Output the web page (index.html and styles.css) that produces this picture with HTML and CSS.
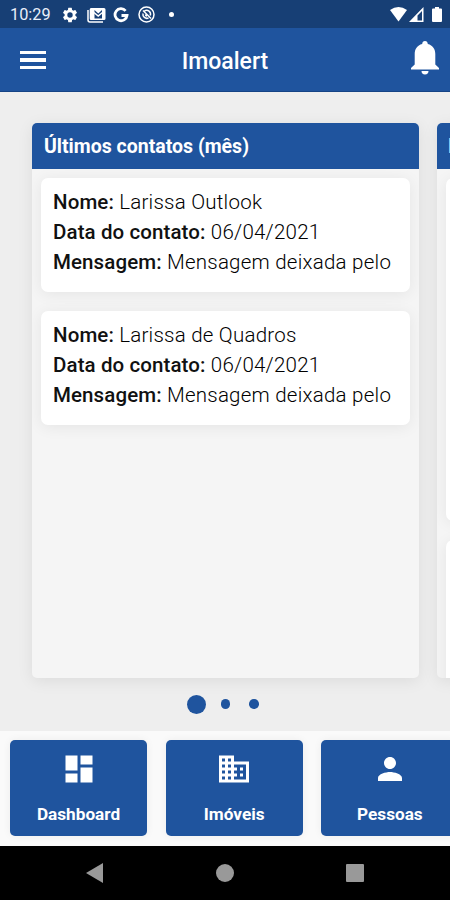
FILE: index.html
```html
<!DOCTYPE html>
<html lang="pt-BR">
<head>
<meta charset="utf-8">
<title>Imoalert</title>
<link rel="stylesheet" href="styles.css">
</head>
<body>
<div class="status">
  <span class="time">10:29</span>
  <div class="status-icons">
    <svg width="18" height="18" viewBox="0 0 24 24"><path d="M19.14 12.94c.04-.3.06-.61.06-.94s-.02-.64-.07-.94l2.03-1.58a.49.49 0 0 0 .12-.61l-1.92-3.32a.49.49 0 0 0-.59-.22l-2.39.96a7 7 0 0 0-1.62-.94l-.36-2.54a.48.48 0 0 0-.48-.41h-3.84a.47.47 0 0 0-.47.41l-.36 2.54c-.59.24-1.13.57-1.62.94l-2.39-.96a.48.48 0 0 0-.59.22L2.74 8.87a.47.47 0 0 0 .12.61l2.03 1.58a6 6 0 0 0 0 1.88l-2.03 1.58a.49.49 0 0 0-.12.61l1.92 3.32c.12.22.37.29.59.22l2.39-.96c.5.38 1.03.7 1.62.94l.36 2.54c.05.24.24.41.48.41h3.84c.24 0 .44-.17.47-.41l.36-2.54c.59-.24 1.13-.56 1.62-.94l2.39.96c.22.08.47 0 .59-.22l1.92-3.32a.47.47 0 0 0-.12-.61zM12 15.6A3.6 3.6 0 1 1 12 8.4a3.6 3.6 0 0 1 0 7.2z"/></svg>
    <svg width="19" height="16" viewBox="0 0 19 16"><path class="line" d="M1 3v10q0 2 2 2h13"/><path fill-rule="evenodd" d="M4 1h13q1.500 0 1.500 1.500v9q0 1.500-1.500 1.500H4q-1.300 0-1.300-1.500v-9Q2.700 1 4 1zM7.500 3v8.500h7.500V3l-3.700 3.500z"/><path class="line" d="M7 5.500l4.200 3.500L15.500 5.500"/></svg>
    <svg width="16" height="16" viewBox="0 0 16 16"><path class="letter" d="M12.600 3.800A6 6 0 1 0 14 8.500H8.500"/></svg>
    <svg width="17" height="17" viewBox="0 0 17 17"><circle class="line" cx="8.500" cy="8.500" r="7.500"/><path class="line" d="M5 4.500l8 8M5 7.500a4 4 0 0 0 5.500 4.500M6.500 4.800a4 4 0 0 1 5.800 4.700M7.500 8.500a1.500 1.500 0 0 0 1.500 1.500"/></svg>
    <i class="bullet"></i>
  </div>
  <div class="signals">
    <svg width="17" height="15" viewBox="0 0 17 15"><path d="M0 3Q8.500-3 17 3L8.500 14.500z"/></svg>
    <svg width="15" height="15" viewBox="0 0 15 15"><path fill-rule="evenodd" d="M14.500 0v15H0zM13 4L8.500 8.500v5H13z"/></svg>
    <svg width="10" height="15" viewBox="0 0 10 15"><path d="M3 0h4v1.500h2q1 0 1 1V14q0 1-1 1H1q-1 0-1-1V2.500q0-1 1-1h2z"/></svg>
  </div>
</div>
<header class="bar">
  <div class="menu"><i></i><i></i><i></i></div>
  <h1>Imoalert</h1>
  <svg class="bell" width="28" height="34" viewBox="0 0 28 34"><path d="M14 0c1.700 0 2.700 1.200 2.800 3 5 1.200 7.500 5.300 7.500 10v10.500L28 27v1.500H0V27l3.700-3.500V13c0-4.700 2.500-8.800 7.500-10C11.300 1.200 12.300 0 14 0zM10.500 30h7a3.500 3.500 0 0 1-7 0z"/></svg>
</header>
<main class="slides">
  <section class="panel">
    <h2>Últimos contatos (mês)</h2>
    <article class="contact">
      <p><b>Nome:</b> Larissa Outlook</p>
      <p><b>Data do contato:</b> 06/04/2021</p>
      <p><b>Mensagem:</b> Mensagem deixada pelo</p>
    </article>
    <article class="contact">
      <p><b>Nome:</b> Larissa de Quadros</p>
      <p><b>Data do contato:</b> 06/04/2021</p>
      <p><b>Mensagem:</b> Mensagem deixada pelo</p>
    </article>
  </section>
  <section class="panel next">
    <h2>I</h2>
    <article class="contact tall"></article>
    <article class="contact rest"></article>
  </section>
</main>
<div class="dots"><i class="active"></i><i></i><i></i></div>
<nav class="tabs">
  <a class="tab"><svg width="36" height="36" viewBox="0 0 24 24"><path d="M3 13h8V3H3v10zm0 8h8v-6H3v6zm10 0h8V11h-8v10zm0-18v6h8V3h-8z"/></svg><span>Dashboard</span></a>
  <a class="tab"><svg width="36" height="36" viewBox="0 0 24 24"><path d="M12 7V3H2v18h20V7H12zM6 19H4v-2h2v2zm0-4H4v-2h2v2zm0-4H4V9h2v2zm0-4H4V5h2v2zm4 12H8v-2h2v2zm0-4H8v-2h2v2zm0-4H8V9h2v2zm0-4H8V5h2v2zm10 12h-8v-2h2v-2h-2v-2h2v-2h-2V9h8v10zm-2-8h-2v2h2v-2zm0 4h-2v2h2v-2z"/></svg><span>Imóveis</span></a>
  <a class="tab"><svg width="36" height="36" viewBox="0 0 24 24"><path d="M12 12c2.210 0 4-1.790 4-4s-1.790-4-4-4-4 1.790-4 4 1.790 4 4 4zm0 2c-2.670 0-8 1.340-8 4v2h16v-2c0-2.660-5.330-4-8-4z"/></svg><span>Pessoas</span></a>
</nav>
<footer class="system">
  <svg width="17" height="20" viewBox="0 0 17 20"><path d="M17 0v20L0 10z"/></svg>
  <svg width="18" height="18" viewBox="0 0 18 18"><circle cx="9" cy="9" r="9"/></svg>
  <svg width="18" height="18" viewBox="0 0 18 18"><rect width="18" height="18" rx="1"/></svg>
</footer>
</body>
</html>
```
FILE: styles.css
```css
* { box-sizing: border-box; }
body { margin: 0; width: 450px; height: 900px; overflow: hidden; display: flex; flex-direction: column; background: #eee; font-family: Roboto, sans-serif; color: #111; }
h1, h2, p { margin: 0; }
svg { display: block; fill: #fff; flex: none; }
.line { fill: none; stroke: #fff; stroke-width: 1.5; }
.letter { fill: none; stroke: #fff; stroke-width: 2.8; }

.status { height: 28px; flex: none; background: #173f75; display: flex; align-items: center; padding: 1px 8px 0 10px; color: #e8eefa; }
.time { font-size: 16.3px; width: 51px; }
.status-icons { display: flex; align-items: center; gap: 8px; }
.status-icons svg:nth-child(3) { margin-left: -1px; margin-right: 1px; }
.bullet { width: 5px; height: 5px; border-radius: 50%; background: #fff; margin-left: 6px; }
.signals { display: flex; margin-left: auto; gap: 2px; }
.signals svg:last-child { margin-left: 6px; }

.bar { height: 64px; flex: none; background: #1f549e; border-bottom: 1px solid #154485; display: grid; grid-template-columns: 26px 1fr 28px; align-items: center; padding: 0 11px 0 20px; }
.menu { display: flex; flex-direction: column; gap: 4px; margin-top: 1px; }
.menu i { height: 3.500px; background: #fff; }
.bar h1 { font-size: 23px; font-weight: 500; color: #fff; line-height: 28px; margin-top: 4px; padding-right: 7px; text-align: center; }
.bell { margin-bottom: 4px; }

.slides { height: 612px; margin-bottom: -26px; flex: none; display: flex; gap: 18px; padding: 31px 0 26px 32px; overflow: hidden; }
.panel { width: 387px; height: 555px; flex: none; background: #f5f5f5; border-radius: 5px; overflow: hidden; box-shadow: 0 3px 16px rgba(0,0,0,.08); }
.panel h2 { height: 46px; padding-left: 12px; background: #1f549e; color: #fff; font-size: 19.500px; font-weight: 700; line-height: 47px; }
.panel.next h2 { padding-left: 11px; }
.contact { height: 114px; margin: 9px 9px 19px; padding: 10px 12px; background: #fff; border-radius: 7px; box-shadow: 0 2px 16px rgba(0,0,0,.07); }
.contact p { font-size: 20.500px; line-height: 29.800px; white-space: nowrap; font-weight: 300; color: #000; letter-spacing: .24px; }
.contact b { font-weight: 500; color: #111; letter-spacing: .1px; }
.tall { height: 343px; }
.rest { height: 200px; }

.dots { height: 53px; flex: none; display: flex; align-items: center; justify-content: center; gap: 19px; padding: 0 5px 1px 0; }
.dots i { width: 9.500px; height: 9.500px; border-radius: 50%; background: #1f549e; }
.dots .active { width: 19px; height: 19px; margin-right: -4px; }

.tabs { height: 115px; flex: none; display: flex; gap: 18.700px; padding: 9px 0 0 10px; background: #fafafa; overflow: hidden; }
.tab { width: 137px; height: 96px; flex: none; background: #1f549e; border-radius: 5px; display: flex; flex-direction: column; align-items: center; padding-top: 11px; box-shadow: 0 0 8px rgba(0,0,0,.06); }
.tab span { margin-top: 16px; color: #fff; font-size: 17.2px; font-weight: 700; line-height: 22px; }

.system { height: 54px; flex: none; background: #000; display: flex; justify-content: space-between; align-items: center; padding: 0 86px; }
.system svg { fill: #999; }
```
